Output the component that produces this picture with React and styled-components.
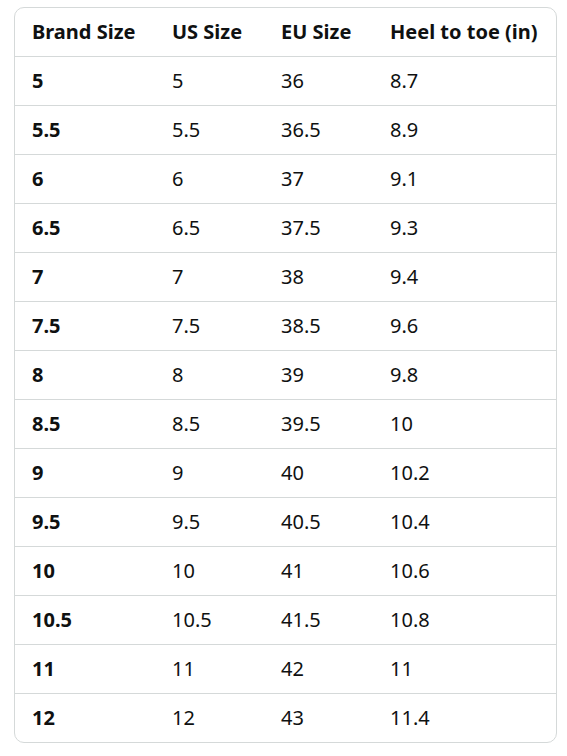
import React from "react";
import styled, { createGlobalStyle } from "styled-components";

const Global = createGlobalStyle`
  html, body { margin: 0; padding: 0; background: #ffffff; }
  body { font-family: "Noto Sans", "Open Sans", Arial, sans-serif; color: #0f1111; }
`;

const Page = styled.div`
  padding: 7px 10px 14px 14px;
`;

const Frame = styled.div`
  width: 541px;
  border: 1px solid #d5d9d9;
  border-radius: 10px;
  overflow: hidden;
`;

const Table = styled.table`
  width: 100%;
  border-collapse: collapse;
  table-layout: fixed;
`;

const Cell = styled.td`
  height: 48px;
  padding: 0 10px 0 17px;
  font-size: 20px;
  line-height: 24px;
  font-weight: ${(p) => (p.$bold ? 700 : 400)};
  color: #0f1111;
  text-align: left;
  white-space: nowrap;
  border-top: ${(p) => (p.$first ? "none" : "1px solid #d5d9d9")};
`;

const cols = [140, 109, 109, 183];
const header = ["Brand Size", "US Size", "EU Size", "Heel to toe (in)"];
const rows = [
  ["5", "5", "36", "8.7"],
  ["5.5", "5.5", "36.5", "8.9"],
  ["6", "6", "37", "9.1"],
  ["6.5", "6.5", "37.5", "9.3"],
  ["7", "7", "38", "9.4"],
  ["7.5", "7.5", "38.5", "9.6"],
  ["8", "8", "39", "9.8"],
  ["8.5", "8.5", "39.5", "10"],
  ["9", "9", "40", "10.2"],
  ["9.5", "9.5", "40.5", "10.4"],
  ["10", "10", "41", "10.6"],
  ["10.5", "10.5", "41.5", "10.8"],
  ["11", "11", "42", "11"],
  ["12", "12", "43", "11.4"],
];

export default function App() {
  return (
    <Page>
      <Global />
      <Frame>
        <Table>
          <colgroup>
            {cols.map((w, i) => (
              <col key={i} style={{ width: w }} />
            ))}
          </colgroup>
          <thead>
            <tr>
              {header.map((h, i) => (
                <Cell as="th" key={i} $bold $first>
                  {h}
                </Cell>
              ))}
            </tr>
          </thead>
          <tbody>
            {rows.map((r, ri) => (
              <tr key={ri}>
                {r.map((c, ci) => (
                  <Cell key={ci} $bold={ci === 0}>
                    {c}
                  </Cell>
                ))}
              </tr>
            ))}
          </tbody>
        </Table>
      </Frame>
    </Page>
  );
}
